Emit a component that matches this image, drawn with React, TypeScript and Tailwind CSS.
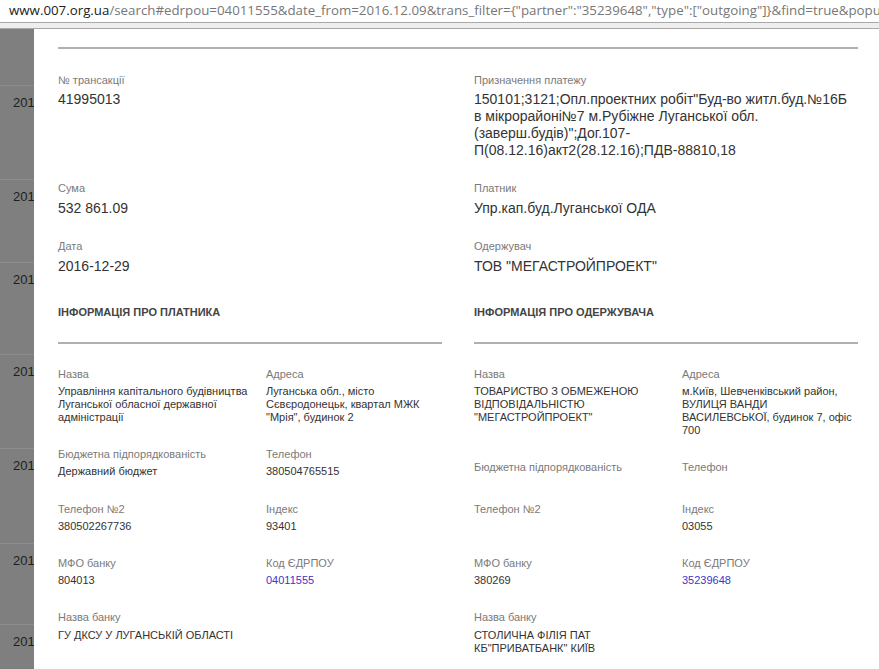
const URL_REST =
  '/search#edrpou=04011555&date_from=2016.12.09&trans_filter={"partner":"35239648","type":["outgoing"]}&find=true&popup=1';

// rows of the table that sits under the modal overlay
const BG_ROWS = [
  { year: "2016", h: "h-[94px]" },
  { year: "2016", h: "h-[83px]" },
  { year: "2016", h: "h-[92px]" },
  { year: "2016", h: "h-[94px]" },
  { year: "2016", h: "h-[95px]" },
  { year: "2016", h: "h-[81px]" },
  { year: "2017", h: "h-[60px]" },
];

type Field = { label: string; value?: string; link?: boolean };

const TOP_FIELDS: Field[] = [
  { label: "№ трансакції", value: "41995013" },
  {
    label: "Призначення платежу",
    value:
      '150101;3121;Опл.проектних робіт"Буд-во житл.буд.№16Б в мікрорайоні№7 м.Рубіжне Луганської обл. (заверш.будів)";Дог.107-П(08.12.16)акт2(28.12.16);ПДВ-88810,18',
  },
  { label: "Сума", value: "532 861.09" },
  { label: "Платник", value: "Упр.кап.буд.Луганської ОДА" },
  { label: "Дата", value: "2016-12-29" },
  { label: "Одержувач", value: 'ТОВ "МЕГАСТРОЙПРОЕКТ"' },
];

const PAYER: Field[] = [
  { label: "Назва", value: "Управління капітального будівництва Луганської обласної державної адміністрації" },
  { label: "Адреса", value: 'Луганська обл., місто Сєвєродонецьк, квартал МЖК "Мрія", будинок 2' },
  { label: "Бюджетна підпорядкованість", value: "Державний бюджет" },
  { label: "Телефон", value: "380504765515" },
  { label: "Телефон №2", value: "380502267736" },
  { label: "Індекс", value: "93401" },
  { label: "МФО банку", value: "804013" },
  { label: "Код ЄДРПОУ", value: "04011555", link: true },
  { label: "Назва банку", value: "ГУ ДКСУ У ЛУГАНСЬКІЙ ОБЛАСТІ" },
];

const RECEIVER: Field[] = [
  { label: "Назва", value: 'ТОВАРИСТВО З ОБМЕЖЕНОЮ ВІДПОВІДАЛЬНІСТЮ "МЕГАСТРОЙПРОЕКТ"' },
  { label: "Адреса", value: "м.Київ, Шевченківський район, ВУЛИЦЯ ВАНДИ ВАСИЛЕВСЬКОЇ, будинок 7, офіс 700" },
  { label: "Бюджетна підпорядкованість" },
  { label: "Телефон" },
  { label: "Телефон №2" },
  { label: "Індекс", value: "03055" },
  { label: "МФО банку", value: "380269" },
  { label: "Код ЄДРПОУ", value: "35239648", link: true },
  { label: "Назва банку", value: 'СТОЛИЧНА ФІЛІЯ ПАТ КБ"ПРИВАТБАНК" КИЇВ' },
];

function TopField({ f }: { f: Field }) {
  return (
    <div className="mb-6">
      <div className="mb-1 text-[11px] leading-[1.2] text-[#7a7a7a]">{f.label}</div>
      <div className="text-[14px] leading-[1.2] text-[#333]">{f.value}</div>
    </div>
  );
}

function SmallField({ f }: { f: Field }) {
  return (
    <div className="mb-6">
      <div className="mb-1 text-[11px] leading-[1.2] text-[#7a7a7a]">{f.label}</div>
      {f.value && (
        <div className={`text-[11px] leading-[1.2] ${f.link ? "text-[#3b36c9]" : "text-[#333]"}`}>
          {f.value}
        </div>
      )}
    </div>
  );
}

function Party({ title, fields }: { title: string; fields: Field[] }) {
  return (
    <div>
      <h4 className="mt-2 mb-[22px] text-[11px] font-bold uppercase leading-[1.2] text-[#444]">{title}</h4>
      <div className="mb-6 h-[2px] bg-[#b0b0b0]" />
      <div className="grid grid-cols-[192px_176px] gap-x-4">
        {fields.map((f) => (
          <SmallField key={f.label} f={f} />
        ))}
      </div>
    </div>
  );
}

export default function App() {
  return (
    <div className="h-[669px] w-[879px] overflow-hidden bg-white font-['Liberation_Sans',Arial,sans-serif]">
      {/* browser address bar */}
      <div className="flex h-[22px] items-center overflow-hidden whitespace-nowrap">
        <div className="ml-[1px] h-[14px] w-px bg-[#c8c8c8]" />
        <div className="ml-[8px] font-['Open_Sans',sans-serif] text-[13.3px] text-[#777]">
          <span className="text-[#222]">www.007.org.ua</span>
          {URL_REST}
        </div>
      </div>
      <div className="h-px bg-[#a9a9a9]" />
      <div className="h-[5px] bg-[#eeeeee]" />
      <div className="h-px bg-[#a9a9a9]" />

      <div className="flex h-[640px]">
        {/* overlay with table behind */}
        <div className="w-[34px] shrink-0 overflow-hidden bg-[#7f7f7f] pt-[56px]">
          {BG_ROWS.map((r, i) => (
            <div key={i} className={`${r.h} border-t border-[#8c8c8c] pl-[13px] pt-[4px]`}>
              <span className="text-[13px] leading-[14px] text-[#1e1e1e]">{r.year}</span>
            </div>
          ))}
        </div>

        {/* modal */}
        <div className="flex-1 overflow-hidden bg-white pl-6 pt-[18px]">
          <div className="w-[800px]">
            <div className="mb-[25px] h-[2px] bg-[#b0b0b0]" />
            <div className="grid grid-cols-2 gap-x-8">
              {TOP_FIELDS.map((f) => (
                <TopField key={f.label} f={f} />
              ))}
            </div>
            <div className="grid grid-cols-2 items-start gap-x-8">
              <Party title="Інформація про платника" fields={PAYER} />
              <Party title="Інформація про одержувача" fields={RECEIVER} />
            </div>
          </div>
        </div>
      </div>
    </div>
  );
}
